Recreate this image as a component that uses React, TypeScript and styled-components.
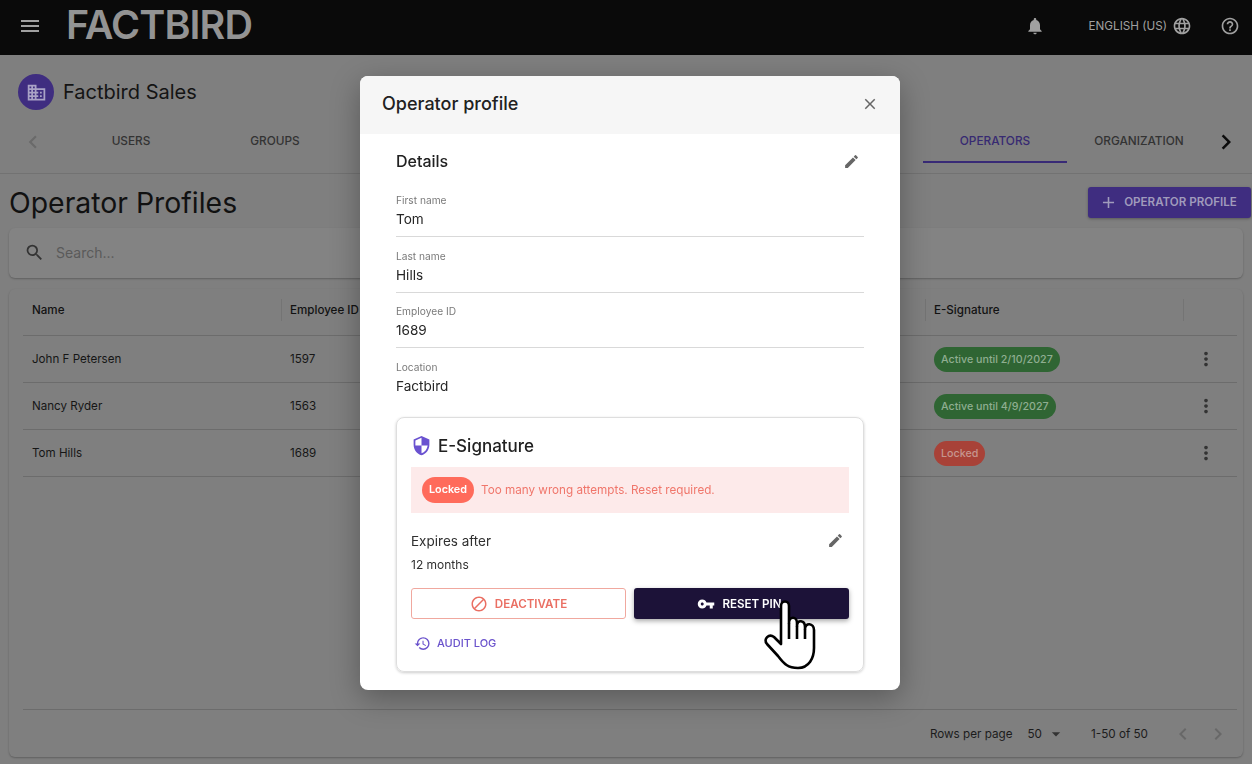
import React from "react";
import styled, { createGlobalStyle } from "styled-components";
import {
  MdAdd,
  MdArrowDropDown,
  MdBlock,
  MdChevronLeft,
  MdChevronRight,
  MdClose,
  MdDomain,
  MdEdit,
  MdHelpOutline,
  MdHistory,
  MdLanguage,
  MdMenu,
  MdMoreVert,
  MdNotifications,
  MdSearch,
  MdSecurity,
  MdVpnKey,
} from "react-icons/md";

const GlobalStyle = createGlobalStyle`
  html, body {
    margin: 0;
    padding: 0;
    height: 100%;
    overflow: hidden;
    background: #7f7f7f;
    font-family: Inter, "Liberation Sans", sans-serif;
  }
`;

type Operator = {
  name: string;
  employeeId: string;
  status: string;
  locked?: boolean;
};

const operators: Operator[] = [
  { name: "John F Petersen", employeeId: "1597", status: "Active until 2/10/2027" },
  { name: "Nancy Ryder", employeeId: "1563", status: "Active until 4/9/2027" },
  { name: "Tom Hills", employeeId: "1689", status: "Locked", locked: true },
];

const details = [
  { label: "First name", value: "Tom" },
  { label: "Last name", value: "Hills" },
  { label: "Employee ID", value: "1689" },
  { label: "Location", value: "Factbird" },
];

function HandCursor() {
  return (
    <Cursor viewBox="0 0 60 76" width="60" height="76">
      <path
        d="M21 48V10C21 4 29 4 29 10V27C29 20 37 20 37 27V30C37 23 45 24 45 31V33C45 26 54 27 54 34V52C54 62 49 72 38 72C28 72 24 68 18 60L7 48C3 43 9 37 14 41Z"
        fill="#fff"
        stroke="#000"
        strokeWidth="2.6"
        strokeLinejoin="round"
      />
      <path d="M29 27V43M37 30V43M45 33V43" fill="none" stroke="#000" strokeWidth="2.6" />
    </Cursor>
  );
}

function App() {
  return (
    <>
      <GlobalStyle />
      <Page>
        <TopBar>
          <MenuIcon />
          <Logo>FACTBIRD</Logo>
          <TopActions>
            <MdNotifications size={20} />
            <Language>
              ENGLISH (US)
              <MdLanguage size={20} />
            </Language>
            <MdHelpOutline size={20} />
          </TopActions>
        </TopBar>

        <OrgRow>
          <OrgAvatar>
            <MdDomain size={21} />
          </OrgAvatar>
          <OrgName>Factbird Sales</OrgName>
        </OrgRow>

        <TabBar>
          <ScrollArrow $faded>
            <MdChevronLeft size={26} />
          </ScrollArrow>
          <Tab>USERS</Tab>
          <Tab>GROUPS</Tab>
          <HiddenTabs />
          <Tab $active>OPERATORS</Tab>
          <Tab>ORGANIZATION</Tab>
          <ScrollArrow>
            <MdChevronRight size={30} />
          </ScrollArrow>
        </TabBar>

        <Content>
          <TitleRow>
            <PageTitle>Operator Profiles</PageTitle>
            <AddButton>
              <MdAdd size={19} />
              OPERATOR PROFILE
            </AddButton>
          </TitleRow>

          <SearchCard>
            <MdSearch size={21} />
            <SearchText>Search...</SearchText>
          </SearchCard>

          <TableCard>
            <HeadRow>
              <HeadCell>Name</HeadCell>
              <HeadCell>Employee ID</HeadCell>
              <HeadCell>E-Signature</HeadCell>
              <HeadCell />
            </HeadRow>
            {operators.map((op) => (
              <BodyRow key={op.name}>
                <BodyCell>{op.name}</BodyCell>
                <BodyCell>{op.employeeId}</BodyCell>
                <BodyCell>
                  <StatusChip $locked={op.locked}>{op.status}</StatusChip>
                </BodyCell>
                <MoreCell>
                  <MdMoreVert size={22} />
                </MoreCell>
              </BodyRow>
            ))}
            <TableFooter>
              <span>Rows per page</span>
              <RowsSelect>
                50
                <MdArrowDropDown size={20} />
              </RowsSelect>
              <PageRange>1-50 of 50</PageRange>
              <PagerIcons>
                <MdChevronLeft size={24} />
                <MdChevronRight size={24} />
              </PagerIcons>
            </TableFooter>
          </TableCard>
        </Content>
      </Page>

      <Modal>
        <ModalHeader>
          <ModalTitle>Operator profile</ModalTitle>
          <MdClose size={18} />
        </ModalHeader>
        <ModalBody>
          <SectionHead>
            <SectionTitle>Details</SectionTitle>
            <EditIcon />
          </SectionHead>
          {details.map((field, i) => (
            <Field key={field.label} $last={i === details.length - 1}>
              <FieldLabel>{field.label}</FieldLabel>
              <FieldValue>{field.value}</FieldValue>
            </Field>
          ))}

          <SignatureCard>
            <SignatureHead>
              <MdSecurity size={21} />
              <SignatureTitle>E-Signature</SignatureTitle>
            </SignatureHead>
            <Alert>
              <AlertChip>Locked</AlertChip>
              Too many wrong attempts. Reset required.
            </Alert>
            <ExpiresRow>
              <ExpiresLabel>Expires after</ExpiresLabel>
              <EditIcon />
            </ExpiresRow>
            <ExpiresValue>12 months</ExpiresValue>
            <ButtonRow>
              <DeactivateButton>
                <MdBlock size={18} />
                DEACTIVATE
              </DeactivateButton>
              <ResetButton>
                <MdVpnKey size={18} />
                RESET PIN
              </ResetButton>
            </ButtonRow>
            <AuditLink>
              <MdHistory size={17} />
              AUDIT LOG
            </AuditLink>
          </SignatureCard>
        </ModalBody>
      </Modal>
      <HandCursor />
    </>
  );
}

const Page = styled.div`
  width: 1252px;
  height: 764px;
  overflow: hidden;
  background: #7f7f7f;
  display: flex;
  flex-direction: column;
`;

const TopBar = styled.header`
  height: 55px;
  flex: none;
  background: #0a0a0a;
  color: #a0a0a0;
  display: flex;
  align-items: center;
  padding: 0 10px 3px 18px;
  box-sizing: border-box;
`;

const MenuIcon = styled(MdMenu)`
  width: 24px;
  height: 24px;
`;

const Logo = styled.div`
  margin-left: 24px;
  font-size: 39.5px;
  line-height: 1;
  font-weight: 600;
  letter-spacing: -0.9px;
  color: #939393;
`;

const TopActions = styled.div`
  margin-left: auto;
  display: flex;
  align-items: center;
  gap: 44px;
  padding-right: 2px;
`;

const Language = styled.div`
  display: flex;
  align-items: center;
  gap: 5px;
  font-size: 11.7px;
  margin-right: -16px;
`;

const OrgRow = styled.div`
  height: 65px;
  flex: none;
  display: flex;
  align-items: flex-start;
  gap: 9px;
  padding: 19px 0 0 18px;
  box-sizing: border-box;
`;

const OrgAvatar = styled.div`
  width: 36px;
  height: 36px;
  border-radius: 50%;
  background: #3f2d80;
  color: #a9a2c6;
  display: flex;
  align-items: center;
  justify-content: center;
`;

const OrgName = styled.div`
  font-size: 20px;
  line-height: 36px;
  color: #141414;
`;

const TabBar = styled.nav`
  height: 54px;
  flex: none;
  display: flex;
  align-items: stretch;
  padding: 0 0 0 8px;
  border-bottom: 1px solid #727272;
  box-sizing: border-box;
`;

const ScrollArrow = styled.div<{ $faded?: boolean }>`
  flex: none;
  width: ${(p) => (p.$faded ? "51px" : "30px")};
  height: 43px;
  display: flex;
  align-items: center;
  justify-content: ${(p) => (p.$faded ? "flex-start" : "center")};
  padding-left: ${(p) => (p.$faded ? "12px" : "0")};
  box-sizing: border-box;
  color: ${(p) => (p.$faded ? "#6a6a6a" : "#0c0c0c")};
`;

const Tab = styled.div<{ $active?: boolean }>`
  flex: none;
  width: 144px;
  height: 43px;
  box-sizing: border-box;
  display: flex;
  align-items: center;
  justify-content: center;
  font-size: 11.8px;
  font-weight: 500;
  color: ${(p) => (p.$active ? "#372a72" : "#333")};
  border-bottom: 2px solid ${(p) => (p.$active ? "#382a76" : "transparent")};
`;

const HiddenTabs = styled.div`
  flex: none;
  width: 576px;
`;

const Content = styled.main`
  flex: 1;
  min-height: 0;
  padding: 0 1px 0 9px;
  display: flex;
  flex-direction: column;
`;

const TitleRow = styled.div`
  height: 54px;
  flex: none;
  display: flex;
  justify-content: space-between;
  align-items: flex-start;
`;

const PageTitle = styled.h1`
  margin: 11px 0 0;
  font-size: 28.4px;
  line-height: 36px;
  font-weight: 400;
  color: #111;
`;

const AddButton = styled.div`
  margin-top: 13px;
  width: 163px;
  height: 31px;
  box-sizing: border-box;
  padding: 0 3px 1px 0;
  border-radius: 3px;
  background: #3f2d80;
  color: #a09bbc;
  display: flex;
  align-items: center;
  justify-content: center;
  gap: 6px;
  font-size: 11.6px;
  font-weight: 600;
  box-shadow: 0 1px 3px rgba(0, 0, 0, 0.3);
`;

const SearchCard = styled.div`
  height: 50px;
  flex: none;
  margin-right: 8px;
  border-radius: 6px;
  background: #838383;
  box-shadow: 0 1px 2px rgba(0, 0, 0, 0.25);
  display: flex;
  align-items: center;
  gap: 11px;
  padding: 0 0 2px 15px;
  box-sizing: border-box;
  color: #333;
`;

const SearchText = styled.span`
  font-size: 14px;
  color: #5a5a5a;
`;

const TableCard = styled.section`
  margin: 11px 8px 7px 0;
  flex: 1;
  min-height: 0;
  border-radius: 6px;
  background: #7f7f7f;
  box-shadow: 0 1px 2px rgba(0, 0, 0, 0.25);
  padding: 0 6px 0 14px;
  display: flex;
  flex-direction: column;
`;

const columns = "258px 644px 258px 54px";

const HeadRow = styled.div`
  height: 47px;
  flex: none;
  box-sizing: border-box;
  padding-bottom: 4px;
  display: grid;
  grid-template-columns: ${columns};
  align-items: center;
  border-bottom: 1px solid #6c6c6c;
`;

const HeadCell = styled.div`
  height: 22px;
  line-height: 22px;
  font-size: 11.6px;
  font-weight: 500;
  color: #121212;
  padding-left: 8px;
  border-left: 1px solid #747474;
  &:first-child {
    border-left: none;
    padding-left: 9px;
  }
`;

const BodyRow = styled.div`
  height: 47px;
  flex: none;
  box-sizing: border-box;
  display: grid;
  grid-template-columns: ${columns};
  align-items: center;
  border-bottom: 1px solid #6c6c6c;
`;

const BodyCell = styled.div`
  font-size: 11.6px;
  color: #161616;
  padding-left: 9px;
`;

const MoreCell = styled.div`
  display: flex;
  justify-content: center;
  padding-right: 8px;
  color: #333;
`;

const StatusChip = styled.span<{ $locked?: boolean }>`
  display: inline-block;
  height: 25px;
  line-height: 25px;
  padding: 0 7px;
  border-radius: 13px;
  font-size: 10.7px;
  font-weight: 500;
  background: ${(p) => (p.$locked ? "#a84238" : "#2f6533")};
  color: ${(p) => (p.$locked ? "#c6968f" : "#8fae91")};
`;

const TableFooter = styled.div`
  margin-top: auto;
  height: 47px;
  flex: none;
  border-top: 1px solid #6c6c6c;
  display: flex;
  align-items: center;
  justify-content: flex-end;
  font-size: 11.7px;
  color: #1c1c1c;
`;

const RowsSelect = styled.div`
  display: flex;
  align-items: center;
  gap: 4px;
  margin-left: 15px;
  svg {
    color: #333;
  }
`;

const PageRange = styled.div`
  margin-left: 25px;
`;

const PagerIcons = styled.div`
  display: flex;
  gap: 11px;
  margin-left: 23px;
  margin-right: 7px;
  color: #686868;
`;

const Modal = styled.div`
  position: fixed;
  left: 360px;
  top: 76px;
  width: 540px;
  height: 614px;
  background: #fff;
  border-radius: 8px;
  overflow: hidden;
  box-shadow: 0 8px 30px rgba(0, 0, 0, 0.3);
  color: #212121;
`;

const ModalHeader = styled.div`
  height: 58px;
  box-sizing: border-box;
  padding: 0 21px 3px 22px;
  background: #f6f6f6;
  display: flex;
  align-items: center;
  justify-content: space-between;
  svg {
    color: #666;
  }
`;

const ModalTitle = styled.div`
  font-size: 18px;
  font-weight: 500;
`;

const ModalBody = styled.div`
  padding: 16px 36px 0;
`;

const SectionHead = styled.div`
  height: 22px;
  display: flex;
  align-items: center;
  justify-content: space-between;
  padding-right: 4px;
  margin-bottom: 9.6px;
`;

const SectionTitle = styled.div`
  font-size: 16px;
  font-weight: 500;
`;

const EditIcon = styled(MdEdit)`
  width: 17px;
  height: 17px;
  color: #666;
`;

const Field = styled.div<{ $last?: boolean }>`
  height: ${(p) => (p.$last ? "50px" : "55.6px")};
  box-sizing: border-box;
  padding-top: 12.4px;
  border-bottom: ${(p) => (p.$last ? "none" : "1px solid #d9d9d9")};
`;

const FieldLabel = styled.div`
  font-size: 10.2px;
  line-height: 13px;
  color: #7a7a7a;
`;

const FieldValue = styled.div`
  margin-top: 3px;
  font-size: 13.6px;
  line-height: 18px;
  color: #262626;
`;

const SignatureCard = styled.div`
  margin-top: 18.6px;
  height: 255px;
  box-sizing: border-box;
  border: 1px solid #dedede;
  border-radius: 8px;
  box-shadow: 0 1px 3px rgba(0, 0, 0, 0.2);
  padding: 0 14px;
`;

const SignatureHead = styled.div`
  height: 49px;
  box-sizing: border-box;
  padding-top: 7px;
  display: flex;
  align-items: center;
  gap: 6px;
  svg {
    color: #6a52d0;
  }
`;

const SignatureTitle = styled.div`
  font-size: 17px;
  font-weight: 500;
`;

const Alert = styled.div`
  height: 46px;
  background: #fdeaea;
  display: flex;
  align-items: center;
  gap: 7px;
  padding-left: 11px;
  font-size: 11.7px;
  color: #f0766b;
`;

const AlertChip = styled.span`
  height: 26px;
  line-height: 26px;
  padding: 0 7px;
  border-radius: 13px;
  background: #ff6b5b;
  color: #fff;
  font-size: 10.8px;
  font-weight: 600;
`;

const ExpiresRow = styled.div`
  margin-top: 18px;
  height: 20px;
  display: flex;
  align-items: center;
  justify-content: space-between;
  padding-right: 5px;
`;

const ExpiresLabel = styled.div`
  font-size: 13.5px;
  color: #303030;
`;

const ExpiresValue = styled.div`
  margin-top: 6px;
  font-size: 12px;
  line-height: 16px;
  color: #303030;
`;

const ButtonRow = styled.div`
  margin-top: 15px;
  display: grid;
  grid-template-columns: 215px 215px;
  gap: 8px;
`;

const DeactivateButton = styled.div`
  height: 31px;
  box-sizing: border-box;
  border: 1px solid #f0a89f;
  border-radius: 3px;
  padding-top: 1px;
  color: #ea6f63;
  display: flex;
  align-items: center;
  justify-content: center;
  gap: 7px;
  font-size: 11.6px;
  font-weight: 600;
`;

const ResetButton = styled.div`
  height: 31px;
  box-sizing: border-box;
  padding: 1px 4px 0 0;
  border-radius: 3px;
  background: #1c1238;
  color: #fff;
  display: flex;
  align-items: center;
  justify-content: center;
  gap: 7px;
  font-size: 11.6px;
  font-weight: 600;
  box-shadow: 0 2px 5px rgba(0, 0, 0, 0.35);
`;

const AuditLink = styled.div`
  margin-top: 16px;
  margin-left: 3px;
  display: flex;
  align-items: center;
  gap: 6px;
  font-size: 11px;
  font-weight: 500;
  color: #6a52cc;
`;

const Cursor = styled.svg`
  position: fixed;
  left: 760px;
  top: 596px;
`;

export default App;
